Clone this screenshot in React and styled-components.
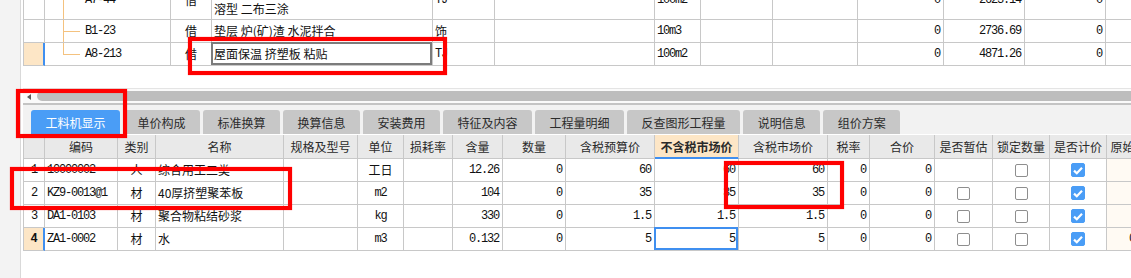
import React from "react"
import styled, { createGlobalStyle } from "styled-components"

const CJK = `"Noto Sans CJK SC", "Noto Sans", sans-serif`
const MONO = `"Liberation Mono", "DejaVu Sans Mono", monospace`
const BLUE = "#3f8ff0"
const LINE = "#c8c8c8"

const GlobalStyle = createGlobalStyle`
  html, body {
    margin: 0;
    padding: 0;
    background: #fff;
  }
  body {
    font-family: ${CJK};
    font-size: 12px;
    color: #222;
  }
`

const Page = styled.div`
  position: relative;
  display: flex;
  width: 1131px;
  height: 278px;
  overflow: hidden;
  background: #fff;
`
const SidePanel = styled.div`
  flex: none;
  width: 20px;
  background: #f3f3f3;
  border-right: 1px solid #d9d9d9;
`
const Main = styled.div`
  flex: 1;
  min-width: 0;
  display: flex;
  flex-direction: column;
  padding-left: 2px;
  background: #fff;
`
const TopArea = styled.div`
  flex: none;
  height: 66px;
  overflow: hidden;
`
const Blank = styled.div`
  flex: none;
  height: 22px;
`
const ScrollBar = styled.div`
  flex: none;
  box-sizing: border-box;
  height: 15px;
  display: flex;
  align-items: flex-start;
  gap: 6px;
  padding: 2px 0 0 4px;
  border-top: 1px solid #e4e4e4;
  background: #fafafa;
`
const Arrow = styled.span`
  flex: none;
  width: 0;
  height: 0;
  margin-top: 3px;
  border-top: 3px solid transparent;
  border-bottom: 3px solid transparent;
  border-right: 4px solid #5a5a5a;
`
const Thumb = styled.div`
  flex: 1;
  height: 10px;
  border-radius: 5px 0 0 5px;
  background: #bdbdbd;
`
const Divider = styled.div`
  flex: none;
  height: 2px;
  background: #c4c4c4;
`
const TabStrip = styled.div`
  flex: none;
  box-sizing: border-box;
  height: 30px;
  display: flex;
  align-items: flex-end;
  gap: 3px;
  padding-left: 8px;
  background: #f2f2f2;
  border-bottom: 1px solid #fff;
`
const Tab = styled.div`
  height: 24px;
  display: flex;
  align-items: center;
  padding: 0 14.5px;
  border-radius: 3px 3px 0 0;
  background: ${({ $active }) => ($active ? "#4a9df6" : "#c7c7c7")};
  color: ${({ $active }) => ($active ? "#fff" : "#2b2b2b")};
  font-size: 12px;
  white-space: nowrap;
`
const Grid = styled.div`
  display: grid;
  grid-template-columns: ${({ $cols }) => $cols.map((w) => w + "px").join(" ")};
  grid-template-rows: ${({ $rows }) => $rows};
  width: max-content;
  margin-top: ${({ $shift }) => $shift || 0}px;
  border-left: 1px solid ${LINE};
`
const justify = { left: "flex-start", center: "center", right: "flex-end" }
const pad = { left: "0 0 0 2px", center: "0", right: "0 3px 0 0" }

const Cell = styled.div`
  position: relative;
  display: flex;
  align-items: center;
  justify-content: ${({ $align }) => justify[$align]};
  box-sizing: border-box;
  padding: ${({ $align }) => pad[$align]};
  border-right: 1px solid ${LINE};
  border-bottom: 1px solid ${LINE};
  background: ${({ $bg }) => $bg || "#fff"};
  font-family: ${({ $mono }) => ($mono ? MONO : CJK)};
  letter-spacing: ${({ $mono }) => ($mono ? "-1.2px" : "0")};
  font-weight: ${({ $bold }) => ($bold ? 700 : 400)};
  font-size: 12px;
  line-height: 16px;
  color: #111;
  white-space: nowrap;

  ${({ $active }) =>
    $active &&
    `
    background: #fde6c6;
    border-right: 2px solid ${BLUE};
  `}

  ${({ $frame }) =>
    $frame &&
    `
    &::after {
      content: "";
      position: absolute;
      top: -1px;
      left: -1px;
      right: 0;
      bottom: 0;
      border: 2px solid ${$frame};
    }
  `}
`
const HeadCell = styled(Cell)`
  background: ${({ $sel }) => ($sel ? "#fde6c6" : "#e9e9e9")};
  color: #2a2a2a;
  border-bottom-color: ${({ $sel }) => ($sel ? BLUE : LINE)};
  box-shadow: ${({ $sel }) => ($sel ? `inset 0 -1px 0 ${BLUE}` : "none")};
`
const Lines = styled.span`
  display: flex;
  flex-direction: column;
  line-height: 18px;
`
const Connector = styled.span`
  flex: none;
  align-self: stretch;
  width: 17px;
  margin: 0 5px 0 16px;
  background:
    linear-gradient(#f4c27f, #f4c27f) left top / 1px ${({ $last }) => ($last ? "50%" : "100%")} no-repeat,
    linear-gradient(#f4c27f, #f4c27f) left center / 100% 1px no-repeat;
`
const Code = styled.span`
  font-family: ${MONO};
  letter-spacing: -1.2px;
`
const Check = styled.span`
  box-sizing: border-box;
  width: ${({ $on }) => ($on ? 14 : 13)}px;
  height: ${({ $on }) => ($on ? 14 : 13)}px;
  display: flex;
  align-items: center;
  justify-content: center;
  border-radius: 2px;
  border: 1px solid ${({ $on }) => ($on ? "#4a9df6" : "#8e8e8e")};
  background: ${({ $on }) => ($on ? "#4a9df6" : "#fff")};
`
const Mark = styled.div`
  position: absolute;
  box-sizing: border-box;
  left: ${({ $x }) => $x}px;
  top: ${({ $y }) => $y}px;
  width: ${({ $w }) => $w}px;
  height: ${({ $h }) => $h}px;
  border: 4px solid #ff0000;
  box-shadow: 0 0 1px rgba(255, 0, 0, 0.6), inset 0 0 1px rgba(255, 0, 0, 0.6);
  pointer-events: none;
`

const isCJK = (s) => /[\u4e00-\u9fff]/.test(s)

const topCols = [21, 126, 41, 221, 62, 160, 46, 72, 85, 86, 81, 81, 60]
const topAlign = ["center", "left", "center", "left", "left", "left", "left", "left", "left", "right", "right", "right", "left"]
const topRows = [
  ["", { code: "A7-44" }, "借", ["涂膜防水 氯丁冷胶涂料 厚2mm - 水乳", "溶型 二布三涂"], "TJ", "", "100m2", "", "", "0", "2623.14", "0", ""],
  ["", { code: "B1-23" }, "借", "垫层 炉(矿)渣 水泥拌合", "饰", "", "10m3", "", "", "0", "2736.69", "0", ""],
  ["", { code: "A8-213", last: true }, "借", { edit: "屋面保温 挤塑板 粘贴" }, "TJ", "", "100m2", "", "", "0", "4871.26", "0", ""],
]

const tabs = ["工料机显示", "单价构成", "标准换算", "换算信息", "安装费用", "特征及内容", "工程量明细", "反查图形工程量", "说明信息", "组价方案"]

const bottomCols = [21, 73, 38, 128, 74, 46, 49, 50, 63, 89, 84, 89, 42, 65, 58, 57, 57, 56]
const bottomAlign = ["center", "left", "center", "left", "left", "center", "center", "right", "right", "right", "right", "right", "right", "right", "center", "center", "center", "right"]
const heads = ["", "编码", "类别", "名称", "规格及型号", "单位", "损耗率", "含量", "数量", "含税预算价", "不含税市场价", "含税市场价", "税率", "合价", "是否暂估", "锁定数量", "是否计价", "原始含量"]
const SEL_COL = 10
const bottomRows = [
  ["1", "10000002", "人", "综合用工二类", "", "工日", "", "12.26", "0", "60", "60", "60", "0", "0", "", "off", "on", ""],
  ["2", "KZ9-0013@1", "材", "40厚挤塑聚苯板", "", "m2", "", "104", "0", "35", "35", "35", "0", "0", "off", "off", "on", ""],
  ["3", "DA1-0103", "材", "聚合物粘结砂浆", "", "kg", "", "330", "0", "1.5", "1.5", "1.5", "0", "0", "off", "off", "on", ""],
  ["4", "ZA1-0002", "材", "水", "", "m3", "", "0.132", "0", "5", "5", "5", "0", "0", "off", "off", "on", "0.132"],
]

function CheckBox({ on }) {
  return (
    <Check $on={on}>
      {on && (
        <svg width="10" height="9" viewBox="0 0 10 9">
          <polyline points="1,4.6 3.8,7.2 9,1.8" fill="none" stroke="#fff" strokeWidth="2.2" />
        </svg>
      )}
    </Check>
  )
}

function TopCell({ value, align }) {
  if (Array.isArray(value)) {
    return (
      <Cell $align={align}>
        <Lines>
          {value.map((l) => (
            <span key={l}>{l}</span>
          ))}
        </Lines>
      </Cell>
    )
  }
  if (value && value.code) {
    return (
      <Cell $align="left">
        <Connector $last={value.last} />
        <Code>{value.code}</Code>
      </Cell>
    )
  }
  if (value && value.edit) {
    return (
      <Cell $align={align} $frame="#7c7c7c">
        {value.edit}
      </Cell>
    )
  }
  return (
    <Cell $align={align} $mono={!isCJK(value)}>
      {value}
    </Cell>
  )
}

function BottomCell({ value, col, row }) {
  const align = bottomAlign[col]
  if (col === 0) {
    const active = row === 3
    return (
      <Cell $align="center" $mono $active={active} $bold={active}>
        {value}
      </Cell>
    )
  }
  const bg = col === bottomCols.length - 1 ? "#fffaf3" : undefined
  if (value === "on" || value === "off") {
    return (
      <Cell $align="center" $bg={bg}>
        <CheckBox on={value === "on"} />
      </Cell>
    )
  }
  return (
    <Cell
      $align={align}
      $mono={!isCJK(value)}
      $bg={bg}
      $frame={row === 3 && col === SEL_COL ? BLUE : undefined}
    >
      {value}
    </Cell>
  )
}

export default function App() {
  return (
    <>
      <GlobalStyle />
      <Page>
        <SidePanel />
        <Main>
          <TopArea>
            <Grid $cols={topCols} $rows="40px 23px 23px" $shift={-20}>
              {topRows.map((r, ri) =>
                r.map((v, ci) =>
                  ci === 0 ? (
                    <Cell key={ri + "-" + ci} $align="center" $active={ri === 2} />
                  ) : (
                    <TopCell key={ri + "-" + ci} value={v} align={topAlign[ci]} />
                  )
                )
              )}
            </Grid>
          </TopArea>
          <Blank />
          <ScrollBar>
            <Arrow />
            <Thumb />
          </ScrollBar>
          <Divider />
          <TabStrip>
            {tabs.map((t, i) => (
              <Tab key={t} $active={i === 0}>
                {t}
              </Tab>
            ))}
          </TabStrip>
          <Grid $cols={bottomCols} $rows="24px repeat(4, 23px)">
            {heads.map((h, i) => (
              <HeadCell key={"h" + i} $align="center" $sel={i === SEL_COL} $bold={i === SEL_COL}>
                {h}
              </HeadCell>
            ))}
            {bottomRows.map((r, ri) =>
              r.map((v, ci) => <BottomCell key={ri + "-" + ci} value={v} col={ci} row={ri} />)
            )}
          </Grid>
        </Main>

        <Mark $x={188} $y={37} $w={259} $h={38} />
        <Mark $x={16} $y={89} $w={111} $h={49} />
        <Mark $x={10} $y={167} $w={282} $h={43} />
        <Mark $x={724} $y={161} $w={120} $h={48} />
      </Page>
    </>
  )
}
